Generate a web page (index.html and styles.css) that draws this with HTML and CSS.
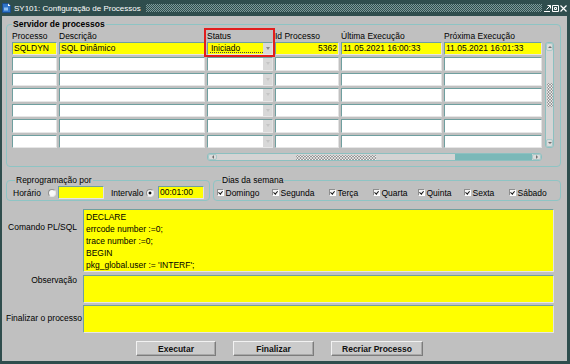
FILE: index.html
```html
<!DOCTYPE html>
<html>
<head>
    <meta charset="utf-8">
    <title>SY101: Configuração de Processos</title>
    <link rel="stylesheet" href="styles.css">
</head>
<body>
<div class="window">
    <div class="titlebar">
        <svg class="app-icon" viewBox="0 0 9 10">
            <path d="M0.5 0.5 H6 L8.5 3 V9.5 H0.5 Z" fill="#2f74c9" stroke="#1b4f91" stroke-width="1"/>
            <path d="M6 0.5 V3 H8.5 Z" fill="#ffffff"/>
            <rect x="2" y="4.5" width="4" height="3" fill="#8fc0f0"/>
        </svg>
        <span class="title">SY101: Configuração de Processos</span>
        <span class="grip"></span>
        <span class="win-buttons">
            <svg viewBox="0 0 7 7"><path d="M0 6.5 H6 M2.5 4.5 L6.5 0.5 M3.5 0.5 H6.5 V3.5" stroke="#ffffff" fill="none" stroke-width="1"/></svg>
            <svg viewBox="0 0 7 7"><path d="M0.5 0.5 H6.5 V6.5 H0.5 Z M2.5 2.5 H4.5 V4.5 H2.5 Z" stroke="#ffffff" fill="none" stroke-width="1"/></svg>
            <svg viewBox="0 0 7 7"><path d="M0.5 0.5 L6.5 6.5 M6.5 0.5 L0.5 6.5" stroke="#ffffff" fill="none" stroke-width="1.2"/></svg>
        </span>
    </div>

    <div class="client">
        <fieldset class="group servers">
            <legend>Servidor de processos</legend>
            <div class="table">
                <div class="cols head">
                    <span>Processo</span>
                    <span>Descrição</span>
                    <span>Status</span>
                    <span>Id Processo</span>
                    <span>Última Execução</span>
                    <span>Próxima Execução</span>
                </div>
                <div class="table-body">
                    <div class="rows">
                        <div class="cols row current">
                            <span class="cell">SQLDYN</span>
                            <span class="cell">SQL Dinâmico</span>
                            <span class="cell status"><span class="value focused">Iniciado</span><span class="drop"></span></span>
                            <span class="cell num">5362</span>
                            <span class="cell">11.05.2021 16:00:33</span>
                            <span class="cell">11.05.2021 16:01:33</span>
                        </div>
                        <div class="cols row"><span class="cell"></span><span class="cell"></span><span class="cell status"><span class="value"></span><span class="drop"></span></span><span class="cell"></span><span class="cell"></span><span class="cell"></span></div>
                        <div class="cols row"><span class="cell"></span><span class="cell"></span><span class="cell status"><span class="value"></span><span class="drop"></span></span><span class="cell"></span><span class="cell"></span><span class="cell"></span></div>
                        <div class="cols row"><span class="cell"></span><span class="cell"></span><span class="cell status"><span class="value"></span><span class="drop"></span></span><span class="cell"></span><span class="cell"></span><span class="cell"></span></div>
                        <div class="cols row"><span class="cell"></span><span class="cell"></span><span class="cell status"><span class="value"></span><span class="drop"></span></span><span class="cell"></span><span class="cell"></span><span class="cell"></span></div>
                        <div class="cols row"><span class="cell"></span><span class="cell"></span><span class="cell status"><span class="value"></span><span class="drop"></span></span><span class="cell"></span><span class="cell"></span><span class="cell"></span></div>
                        <div class="cols row"><span class="cell"></span><span class="cell"></span><span class="cell status"><span class="value"></span><span class="drop"></span></span><span class="cell"></span><span class="cell"></span><span class="cell"></span></div>
                    </div>
                    <div class="vscroll">
                        <span class="arrow up"></span>
                        <span class="thumb"><span class="dots-v"></span></span>
                        <span class="arrow down"></span>
                    </div>
                </div>
                <div class="hscroll">
                    <span class="arrow left"></span>
                    <span class="thumb"><span class="dots-h"></span></span>
                    <span class="track"></span>
                    <span class="arrow right"></span>
                </div>
                <div class="focus-mark"></div>
            </div>
        </fieldset>

        <div class="options">
            <fieldset class="group schedule">
                <legend>Reprogramação por</legend>
                <div class="schedule-row">
                    <span>Horário</span>
                    <span class="radio"></span>
                    <span class="field short"></span>
                    <span class="interval-label">Intervalo</span>
                    <span class="radio checked"></span>
                    <span class="field short interval">00:01:00</span>
                </div>
            </fieldset>
            <fieldset class="group days">
                <legend>Dias da semana</legend>
                <div class="days-row">
                    <label class="check"><span class="box"></span>Domingo</label>
                    <label class="check"><span class="box"></span>Segunda</label>
                    <label class="check"><span class="box"></span>Terça</label>
                    <label class="check"><span class="box"></span>Quarta</label>
                    <label class="check"><span class="box"></span>Quinta</label>
                    <label class="check"><span class="box"></span>Sexta</label>
                    <label class="check"><span class="box"></span>Sábado</label>
                </div>
            </fieldset>
        </div>

        <div class="commands">
            <span class="prompt prompt-sql">Comando PL/SQL</span>
            <div class="field text">DECLARE<br>errcode number :=0;<br>trace number :=0;<br>BEGIN<br>pkg_global.user := 'INTERF';</div>
            <span class="prompt prompt-obs">Observação</span>
            <div class="field text"></div>
            <span class="prompt prompt-end">Finalizar o processo</span>
            <div class="field text"></div>
        </div>

        <div class="actions">
            <button class="btn btn-run">Executar</button>
            <button class="btn btn-end">Finalizar</button>
            <button class="btn btn-again">Recriar Processo</button>
        </div>
    </div>
</div>
</body>
</html>
```

FILE: styles.css
```css
body {
    margin: 0;
    background-color: #2f4d4d;
    font-family: "Liberation Sans", Arial, sans-serif;
    font-size: 8.5px;
    color: #000;
}

.window {
    width: 570px;
    height: 364px;
    display: flex;
    flex-direction: column;
    background-color: #2f4d4d;
    overflow: hidden;
}

/* title bar */
.titlebar {
    height: 16px;
    display: flex;
    align-items: center;
    padding: 0 3px 0 2px;
    color: #fff;
    font-size: 8px;
    white-space: nowrap;
}

.app-icon {
    width: 9px;
    height: 10px;
    margin-right: 3px;
}

.grip {
    flex: 1;
    height: 8px;
    margin: 0 2px 0 5px;
    background-image: repeating-conic-gradient(#7d9a9a 0 25%, transparent 0 50%);
    background-size: 2px 2px;
}

.win-buttons {
    display: flex;
    gap: 1px;
}

.win-buttons svg {
    width: 7px;
    height: 7px;
}

/* client area */
.client {
    flex: 1;
    margin: 0 3px 3px 2px;
    padding: 2px 6px 0 4px;
    background-color: #c0c0c0;
}

.group {
    margin: 0;
    min-width: 0;
    border: 1px solid #8ec4c4;
    border-radius: 4px;
}

.group legend {
    padding: 0 1px;
    line-height: 12px;
}

.servers {
    padding: 1px 6px 5px 5px;
}

.servers legend {
    font-weight: bold;
}

/* multi-row block */
.table {
    position: relative;
}

.cols {
    display: grid;
    grid-template-columns: 45px 146px 66px 64px 101px 98px;
    column-gap: 2px;
}

.head {
    height: 10.5px;
    line-height: 10px;
    white-space: nowrap;
}

.table-body {
    display: flex;
    gap: 3px;
}

.rows {
    display: flex;
    flex-direction: column;
    gap: 2px;
}

.row {
    height: 13.5px;
}

.cell {
    display: flex;
    box-sizing: border-box;
    height: 13.5px;
    padding: 0 1px;
    line-height: 11.5px;
    white-space: nowrap;
    overflow: hidden;
    background-color: #fff;
    border: 1px solid;
    border-color: #6f9f9f #e2e2e2 #e6e6e6 #6f9f9f;
}

.current .cell {
    background-color: #ffff00;
}

.num {
    justify-content: flex-end;
}

.status {
    padding: 0 0 0 1px;
}

.status .value {
    flex: 1;
}

.value.focused {
    box-sizing: border-box;
    height: 10.5px;
    margin-left: 1px;
    padding-left: 1px;
    border-bottom: 1px dotted #444;
}

.drop {
    width: 9px;
    display: flex;
    align-items: center;
    justify-content: center;
    background-color: #d8d8d8;
}

.drop::after {
    content: "";
    border-left: 2.5px solid transparent;
    border-right: 2.5px solid transparent;
    border-top: 3px solid #c4c4c4;
}

.current .drop::after {
    border-top-color: #8a8a8a;
}

/* scroll bars */
.vscroll {
    width: 9px;
    box-sizing: border-box;
    display: flex;
    flex-direction: column;
    border: 1px solid #8cc0c0;
    border-radius: 3px;
    background-color: #d4d4d4;
}

.arrow {
    display: flex;
    align-items: center;
    justify-content: center;
    box-sizing: border-box;
    background-color: #dcdcdc;
    border: 1px solid #a9c9c9;
    border-radius: 2px;
}

.vscroll .arrow {
    height: 8px;
}

.arrow.up::after {
    content: "";
    border-left: 2px solid transparent;
    border-right: 2px solid transparent;
    border-bottom: 2.5px solid #707070;
}

.arrow.down::after {
    content: "";
    border-left: 2px solid transparent;
    border-right: 2px solid transparent;
    border-top: 2.5px solid #707070;
}

.arrow.left::after {
    content: "";
    border-top: 2px solid transparent;
    border-bottom: 2px solid transparent;
    border-right: 2.5px solid #707070;
}

.arrow.right::after {
    content: "";
    border-top: 2px solid transparent;
    border-bottom: 2px solid transparent;
    border-left: 2.5px solid #707070;
}

.thumb {
    flex: 1;
    display: flex;
    align-items: center;
    justify-content: center;
    background-color: #d4d4d4;
}

.dots-v {
    width: 6px;
    height: 24px;
    background-image: radial-gradient(circle, #fbfbfb 0 0.6px, #9a9a9a 0.8px 1.1px, transparent 1.3px);
    background-size: 3px 3px;
}

.dots-h {
    width: 80px;
    height: 5px;
    background-image: radial-gradient(circle, #fbfbfb 0 0.6px, #9a9a9a 0.8px 1.1px, transparent 1.3px);
    background-size: 3px 3px;
}

.hscroll {
    display: flex;
    width: 335px;
    height: 8px;
    margin: 5px 0 0 195px;
    box-sizing: border-box;
    border: 1px solid #8cc0c0;
    border-radius: 3px;
    background-color: #d4d4d4;
}

.hscroll .arrow {
    width: 9px;
}

.hscroll .thumb {
    flex: none;
    width: 238px;
}

.hscroll .track {
    flex: 1;
    background-color: #7ab8b8;
}

.focus-mark {
    position: absolute;
    left: 192px;
    top: -3px;
    width: 71px;
    height: 29px;
    box-sizing: border-box;
    border: 2px solid #e21d1d;
}

/* second line of frames */
.options {
    display: flex;
    gap: 3px;
    margin-top: 7px;
}

.schedule {
    width: 204px;
    box-sizing: border-box;
    padding: 0 4px 1px 6px;
}

.schedule legend {
    margin-left: 2px;
}

.days {
    flex: 1;
    padding: 0 2px 1px 3px;
}

.days legend {
    margin-left: 4px;
}

.schedule-row {
    display: flex;
    align-items: center;
    height: 13px;
    white-space: nowrap;
}

.field {
    box-sizing: border-box;
    background-color: #ffff00;
    border: 1px solid;
    border-color: #6f9f9f #e2e2e2 #e6e6e6 #6f9f9f;
}

.field.short {
    width: 46px;
    height: 13px;
    margin-left: 2px;
    padding-left: 1px;
    line-height: 11px;
}

.interval-label {
    margin-left: 7px;
}

.field.interval {
    margin-left: 4px;
}

.radio {
    width: 8px;
    height: 8px;
    margin-left: 7px;
    box-sizing: border-box;
    border-radius: 50%;
    background-color: #f8f8f8;
    border: 1px solid;
    border-color: #8e8e8e #e8e8e8 #e8e8e8 #8e8e8e;
}

.interval-label + .radio {
    margin-left: 2.5px;
}

.radio.checked {
    background-image: radial-gradient(circle, #111 0 1.3px, transparent 1.7px);
}

.days-row {
    display: grid;
    grid-template-columns: 55px 57px 44px 45px 46px 45px auto;
    align-items: center;
    height: 13px;
}

.check {
    display: flex;
    align-items: center;
    gap: 1.5px;
    white-space: nowrap;
}

.box {
    position: relative;
    width: 7px;
    height: 7px;
    box-sizing: border-box;
    background-color: #f6f6f6;
    border: 1px solid;
    border-color: #8e8e8e #ffffff #ffffff #8e8e8e;
}

.box::after {
    content: "";
    position: absolute;
    left: 1.4px;
    top: -0.4px;
    width: 1.6px;
    height: 3.4px;
    border: solid #111;
    border-width: 0 1.3px 1.3px 0;
    transform: rotate(40deg);
}

/* text items */
.commands {
    display: grid;
    grid-template-columns: 71px 471px;
    grid-template-rows: 63px 28px 28px;
    column-gap: 6px;
    row-gap: 2.5px;
    margin-top: 8px;
}

.prompt {
    text-align: right;
    white-space: nowrap;
    line-height: 11px;
}

.prompt-sql {
    padding-top: 13px;
}

.prompt-obs {
    padding-top: 0.5px;
}

.prompt-end {
    padding-top: 8px;
    margin-right: -5px;
}

.field.text {
    padding: 1px 2px;
    line-height: 12px;
    white-space: nowrap;
}

/* buttons */
.actions {
    display: flex;
    gap: 17px;
    margin-top: 8px;
    padding-left: 130px;
}

.btn {
    height: 15px;
    padding: 0;
    font-family: "Liberation Sans", Arial, sans-serif;
    font-size: 8.5px;
    font-weight: bold;
    color: #111;
    background-color: #cbcbcb;
    border: 1px solid;
    border-color: #f2f2f2 #7c7c7c #7c7c7c #f2f2f2;
    box-shadow: inset -1px -1px #a8a8a8;
}

.btn-run {
    width: 80px;
}

.btn-end {
    width: 81px;
}

.btn-again {
    width: 92px;
}
```
